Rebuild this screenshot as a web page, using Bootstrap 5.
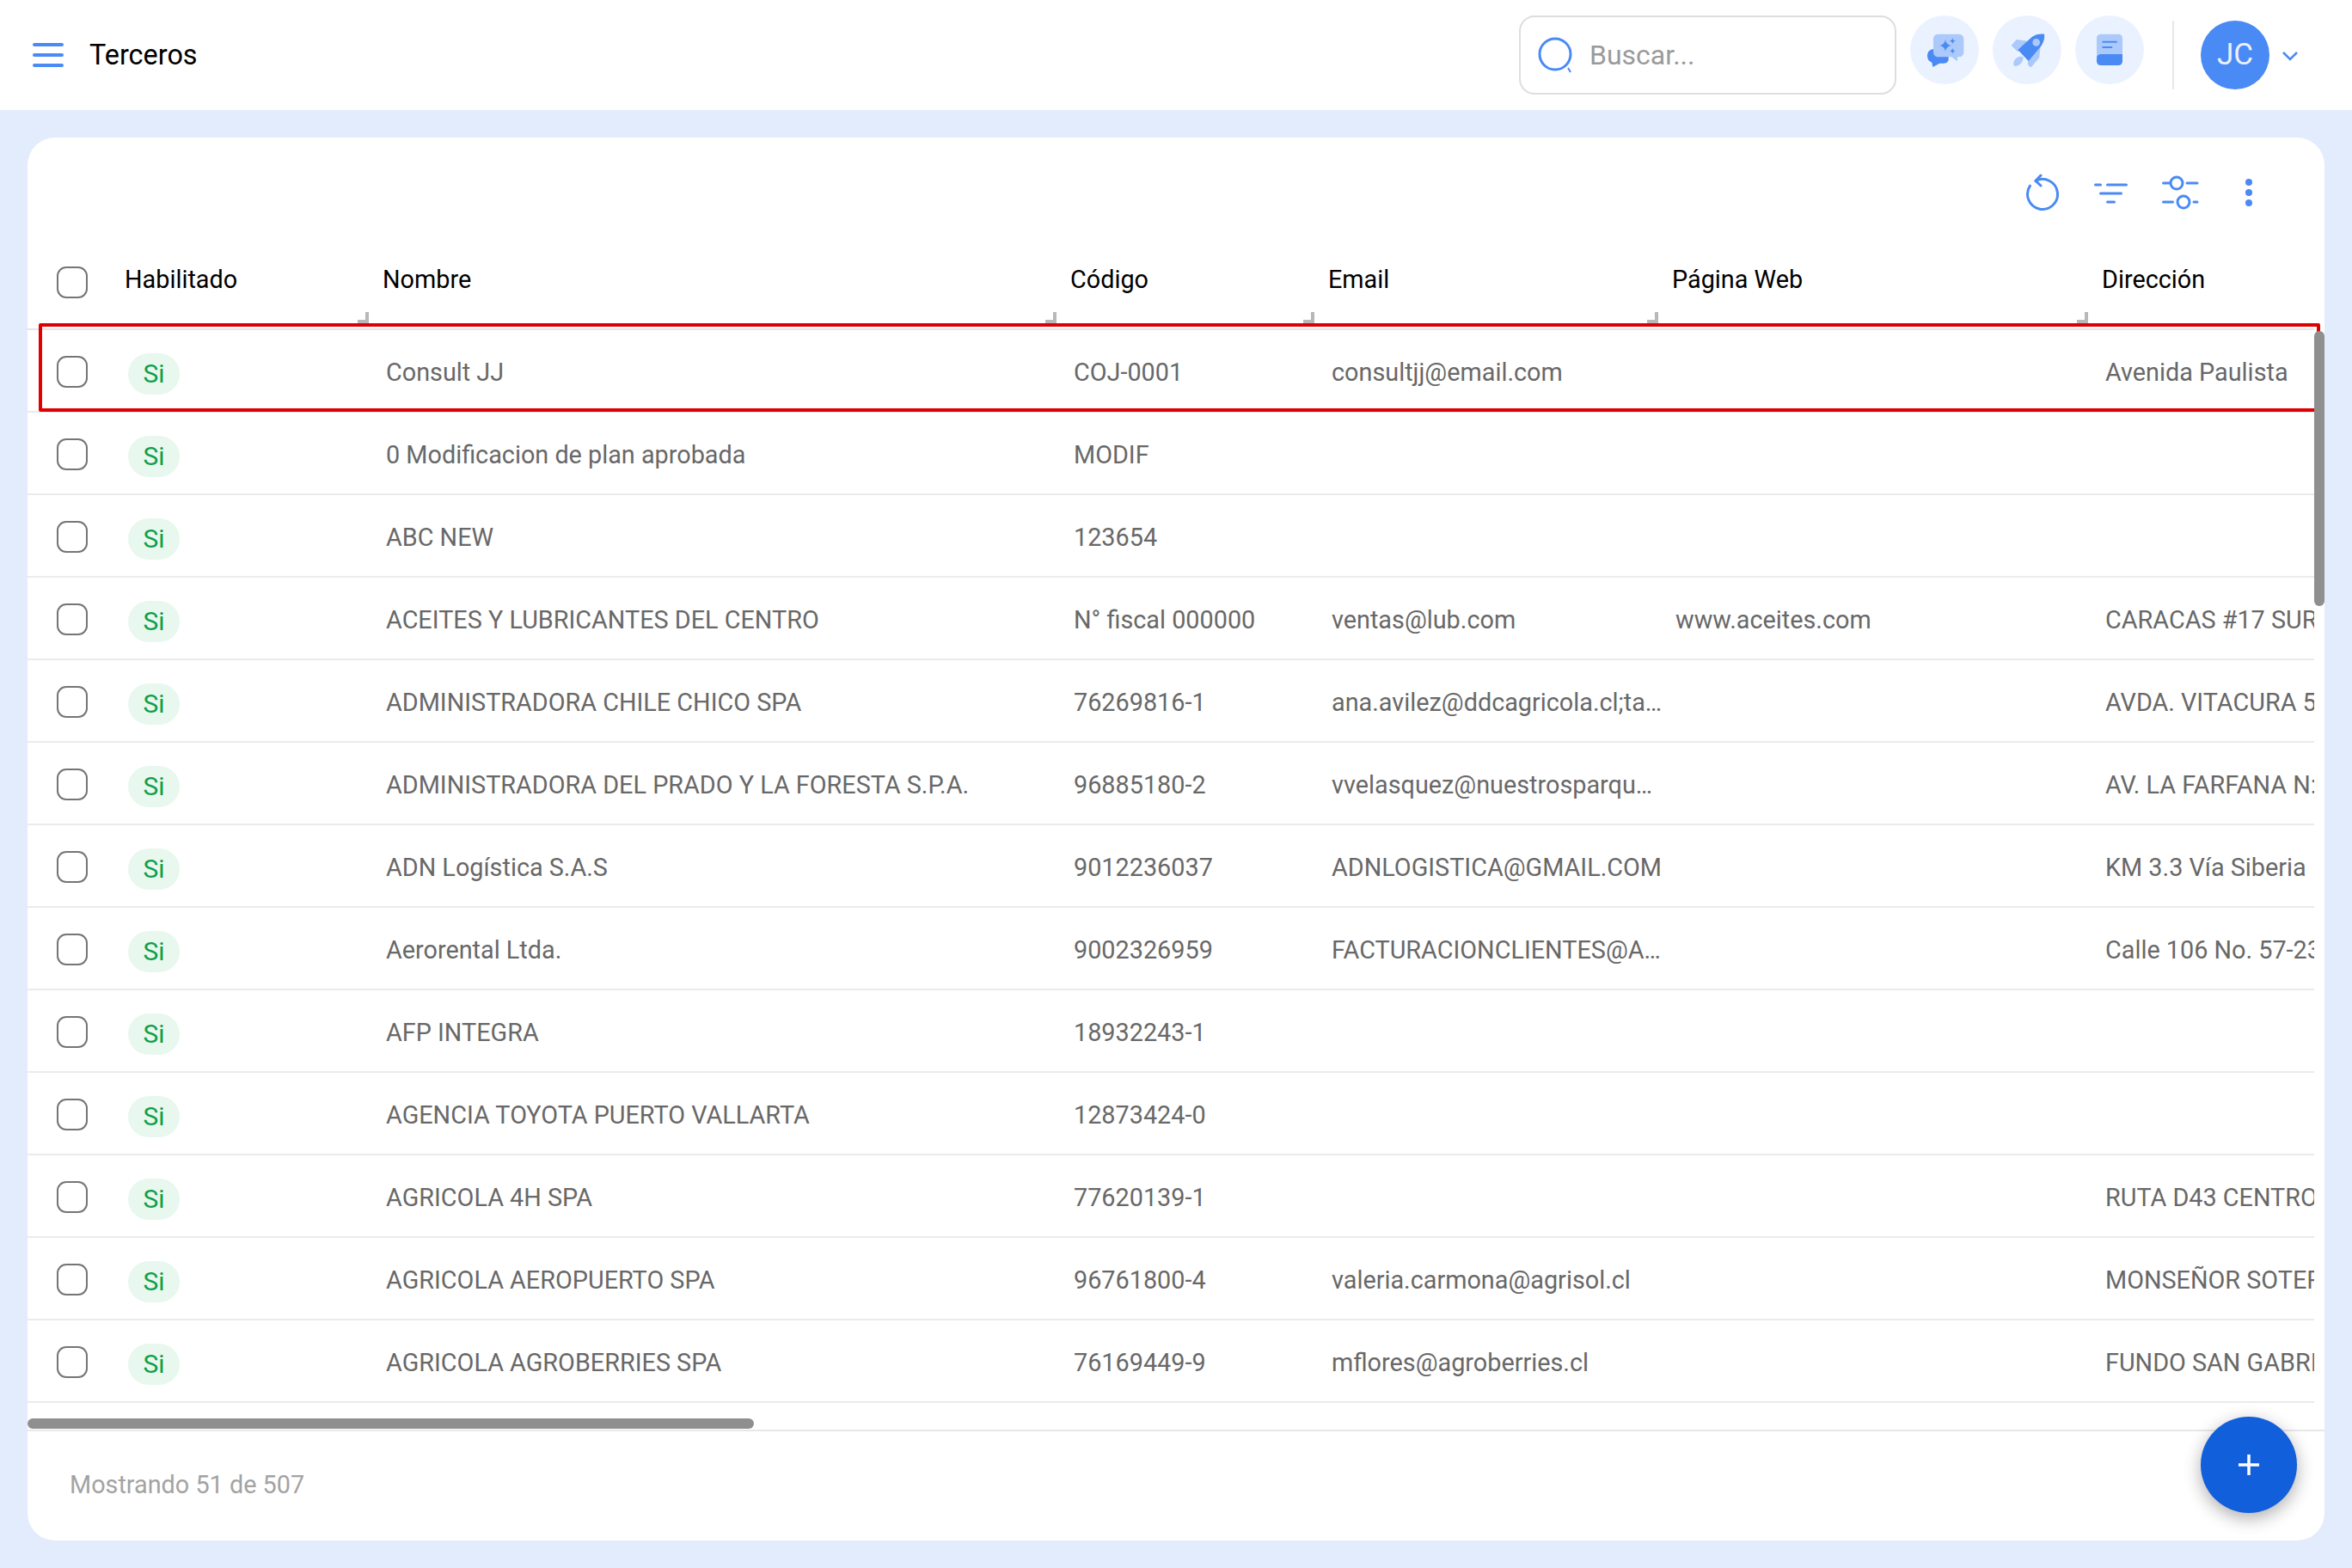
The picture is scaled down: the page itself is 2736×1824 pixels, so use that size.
<!DOCTYPE html>
<html lang="es">
<head>
<meta charset="utf-8">
<title>Terceros</title>
<link href="https://cdn.jsdelivr.net/npm/bootstrap@5.3.0/dist/css/bootstrap.min.css" rel="stylesheet">
<style>
html,body{height:100%;}
body{background:#e3ecfc;font-family:Roboto,"Liberation Sans",sans-serif;font-size:28.8px;overflow:hidden;}
.top-shell{height:128px;background:#fff;padding:0 62px 0 38px;}
.menu-lines{width:36px;height:28px;padding:0;border:0;background:none;display:flex;flex-direction:column;justify-content:space-between;}
.menu-lines span{display:block;height:4px;border-radius:2px;background:#4a8af4;}
.page-name{margin:0 0 0 30px;font-size:32.4px;font-weight:400;color:#000;}
.search-wrap{width:439px;height:92px;border:2px solid #dedede;border-radius:18px;padding:0 20px;background:#fff;gap:18px;}
.search-wrap input{border:0;outline:0;flex:1;min-width:0;font-size:32px;color:#333;background:transparent;padding:0;}
.search-wrap input::placeholder{color:#9a9a9a;opacity:1;}
.round-tools{gap:16px;margin:0 0 12px 16px;}
.round-tool{width:80px;height:80px;border-radius:50%;background:#ebf2ff;border:0;padding:0;display:block;}
.round-tool svg{display:block;}
.v-sep{width:2px;height:80px;background:#e8e8e8;margin:0 31px 0 33px;}
.user-chip{width:80px;height:80px;border-radius:50%;background:#4a8af4;color:#e9f0fe;font-size:35px;display:flex;align-items:center;justify-content:center;}
.user-caret{margin:1px 0 0 14px;}
.main-panel{position:relative;margin:32px 32px 0;height:1632px;background:#fff;border-radius:32px;display:flex;flex-direction:column;overflow:hidden;}
.panel-tools{height:128px;padding:42px 80px 0 0;flex:none;}
.tool-gap-a{margin-left:35px;}
.tool-gap-b{margin-left:36px;}
.tool-gap-c{margin-left:49px;}
.grid-clip{flex:1;min-height:0;margin-right:12px;overflow:hidden;}
.data-grid{table-layout:fixed;width:2897px;border-collapse:separate;border-spacing:0;}
.data-grid th{position:relative;height:96px;padding:0 0 18px 16px;font-weight:400;font-size:28.8px;color:#000;border-bottom:2px solid #e6e6e6;vertical-align:middle;white-space:nowrap;}
.data-grid td{height:96px;padding:5px 0 0 20px;font-size:28.8px;color:#686868;border-bottom:2px solid #ebebeb;vertical-align:middle;white-space:nowrap;line-height:1;}
.data-grid td.check-col{padding:3px 0 0 34px;}
.data-grid th.check-col{padding:0 0 14px 34px;}
.box-check{display:block;width:36px;height:37px;border:2px solid #757575;border-radius:11px;background:#fff;}
.yes-pill{display:inline-flex;align-items:center;justify-content:center;width:60px;height:48px;border-radius:24px;background:#e8f8ee;color:#0e9f4b;font-size:30px;position:relative;top:1px;}
.col-grip{position:absolute;right:0;bottom:2px;width:4px;height:17px;background:#b8b8b8;}
.col-grip::after{content:"";position:absolute;right:0;bottom:0;width:13px;height:8px;background:#b8b8b8;}
.red-frame{position:absolute;left:13px;top:216px;width:2654px;height:103px;border:4px solid #e00000;border-radius:2px;pointer-events:none;}
.thumb-v{position:absolute;right:0;top:225px;width:12px;height:320px;background:#8f8f8f;border-radius:6px;}
.thumb-h{position:absolute;left:0;top:1490px;width:845px;height:12px;background:#8f8f8f;border-radius:6px;}
.panel-foot{flex:none;height:129px;border-top:2px solid #e8e8e8;padding:0 0 1px 49px;color:#a3a3a3;font-size:28.8px;}
.add-fab{position:absolute;right:32px;top:1488px;width:112px;height:112px;border-radius:50%;border:0;background:#115fdb;padding:0;display:flex;align-items:center;justify-content:center;box-shadow:0 6px 20px rgba(0,0,0,.32);}
</style>
</head>
<body>
<header class="top-shell d-flex align-items-center">
  <button class="menu-lines" aria-label="Menú"><span></span><span></span><span></span></button>
  <h1 class="page-name">Terceros</h1>
  <div class="d-flex align-items-center ms-auto">
    <div class="search-wrap d-flex align-items-center">
      <svg width="42" height="42" viewBox="0 0 42 42" fill="none" stroke="#4a8af4"><circle cx="20" cy="20" r="18" stroke-width="3"/><path d="M35 36l3 5" stroke-width="2"/></svg>
      <input type="text" placeholder="Buscar...">
    </div>
    <div class="round-tools d-flex">
      <button class="round-tool" aria-label="Ayuda">
        <svg width="80" height="80" viewBox="67 23 240 240"><path d="M150 140C135 140 127 151 127 164C127 176 133 184 143 187L146 203L170 190H185C195 190 201 183 201 176V140Z" fill="#4a8af4"/><path d="M164 88H238A16 16 0 0 1 254 104V152A16 16 0 0 1 238 168H232V183L212 168H164A16 16 0 0 1 148 152V104A16 16 0 0 1 164 88Z" fill="#abc9fa"/><path d="M190 108Q193 125 210 128Q193 131 190 148Q187 131 170 128Q187 125 190 108ZM215 101Q216 111 226 112Q216 113 215 123Q214 113 204 112Q214 111 215 101ZM215 136Q216 146 226 147Q216 148 215 158Q214 148 204 147Q214 146 215 136Z" fill="#4a8af4"/></svg>
      </button>
      <button class="round-tool" aria-label="Novedades">
        <svg width="80" height="80" viewBox="355 23 240 240"><path d="M420 128L438 107L478 112L443 150ZM522 128L518 170L490 203C483 203 478 197 477 190L480 175ZM462 168C462 185 450 200 432 200C425 198 426 178 440 170C448 165 458 165 462 168Z" fill="#abc9fa"/><path d="M443 143L492 98C505 88 522 86 535 88C538 105 530 122 520 135L480 182Z" fill="#4a8af4"/><circle cx="507" cy="117" r="13" fill="#abc9fa"/></svg>
      </button>
      <button class="round-tool" aria-label="Guía">
        <svg width="80" height="80" viewBox="643 23 240 240"><path d="M732 88H794A14 14 0 0 1 808 102V170H718V102A14 14 0 0 1 732 88Z" fill="#abc9fa"/><path d="M718 172C718 163 725 158 734 158H808V183A14 14 0 0 1 794 197H732A14 14 0 0 1 718 183Z" fill="#4a8af4"/><path d="M740 115H787M740 134H770" stroke="#4a8af4" stroke-width="6" stroke-linecap="round"/></svg>
      </button>
    </div>
    <div class="v-sep"></div>
    <div class="user-chip">JC</div>
    <svg class="user-caret" width="20" height="12" viewBox="0 0 20 12" fill="none" stroke="#4a8af4" stroke-width="2.500"><path d="M2 2l8 8 8-8"/></svg>
  </div>
</header>

<main class="main-panel">
  <div class="panel-tools d-flex justify-content-end align-items-start">
    <svg width="44" height="44" viewBox="0 0 44 44" fill="none" stroke="#4a8af4" stroke-width="3" stroke-linecap="round" stroke-linejoin="round"><path d="M7.500 14.200A17.500 17.500 0 1 0 14 8.400"/><path d="M20 2L14 8.400L20 14"/></svg>
    <svg class="tool-gap-a" width="44" height="44" viewBox="0 0 44 44" fill="none" stroke="#4a8af4" stroke-width="3" stroke-linecap="round"><path d="M4.500 13h6M18.500 13h22M10.500 23h24M18.500 33h8"/></svg>
    <svg class="tool-gap-b" width="46" height="44" viewBox="0 0 46 44" fill="none" stroke="#4a8af4" stroke-width="3" stroke-linecap="round"><path d="M3.500 11h8M31 11h12M3.500 33h11M39 33h4"/><circle cx="19" cy="11" r="7"/><circle cx="27" cy="33" r="7"/></svg>
    <svg class="tool-gap-c" width="16" height="44" viewBox="0 0 16 44" fill="#4a8af4"><circle cx="8" cy="10" r="4"/><circle cx="8" cy="22" r="4"/><circle cx="8" cy="34" r="4"/></svg>
  </div>
  <div class="grid-clip">
    <table class="data-grid">
      <colgroup><col style="width:97px"><col style="width:300px"><col style="width:800px"><col style="width:300px"><col style="width:400px"><col style="width:500px"><col style="width:500px"></colgroup>
      <thead>
        <tr>
          <th class="check-col"><span class="box-check"></span></th>
          <th>Habilitado<i class="col-grip"></i></th>
          <th>Nombre<i class="col-grip"></i></th>
          <th>Código<i class="col-grip"></i></th>
          <th>Email<i class="col-grip"></i></th>
          <th>Página Web<i class="col-grip"></i></th>
          <th>Dirección</th>
        </tr>
      </thead>
      <tbody>
        <tr><td class="check-col"><span class="box-check"></span></td><td><span class="yes-pill">Si</span></td><td>Consult JJ</td><td>COJ-0001</td><td>consultjj@email.com</td><td></td><td>Avenida Paulista</td></tr>
        <tr><td class="check-col"><span class="box-check"></span></td><td><span class="yes-pill">Si</span></td><td>0 Modificacion de plan aprobada</td><td>MODIF</td><td></td><td></td><td></td></tr>
        <tr><td class="check-col"><span class="box-check"></span></td><td><span class="yes-pill">Si</span></td><td>ABC NEW</td><td>123654</td><td></td><td></td><td></td></tr>
        <tr><td class="check-col"><span class="box-check"></span></td><td><span class="yes-pill">Si</span></td><td>ACEITES Y LUBRICANTES DEL CENTRO</td><td>N° fiscal 000000</td><td>ventas@lub.com</td><td>www.aceites.com</td><td>CARACAS #17 SUR</td></tr>
        <tr><td class="check-col"><span class="box-check"></span></td><td><span class="yes-pill">Si</span></td><td>ADMINISTRADORA CHILE CHICO SPA</td><td>76269816-1</td><td>ana.avilez@ddcagricola.cl;ta…</td><td></td><td>AVDA. VITACURA 5</td></tr>
        <tr><td class="check-col"><span class="box-check"></span></td><td><span class="yes-pill">Si</span></td><td>ADMINISTRADORA DEL PRADO Y LA FORESTA S.P.A.</td><td>96885180-2</td><td>vvelasquez@nuestrosparqu…</td><td></td><td>AV. LA FARFANA N:</td></tr>
        <tr><td class="check-col"><span class="box-check"></span></td><td><span class="yes-pill">Si</span></td><td>ADN Logística S.A.S</td><td>9012236037</td><td>ADNLOGISTICA@GMAIL.COM</td><td></td><td>KM 3.3 Vía Siberia</td></tr>
        <tr><td class="check-col"><span class="box-check"></span></td><td><span class="yes-pill">Si</span></td><td>Aerorental Ltda.</td><td>9002326959</td><td>FACTURACIONCLIENTES@A…</td><td></td><td>Calle 106 No. 57-23</td></tr>
        <tr><td class="check-col"><span class="box-check"></span></td><td><span class="yes-pill">Si</span></td><td>AFP INTEGRA</td><td>18932243-1</td><td></td><td></td><td></td></tr>
        <tr><td class="check-col"><span class="box-check"></span></td><td><span class="yes-pill">Si</span></td><td>AGENCIA TOYOTA PUERTO VALLARTA</td><td>12873424-0</td><td></td><td></td><td></td></tr>
        <tr><td class="check-col"><span class="box-check"></span></td><td><span class="yes-pill">Si</span></td><td>AGRICOLA 4H SPA</td><td>77620139-1</td><td></td><td></td><td>RUTA D43 CENTRO</td></tr>
        <tr><td class="check-col"><span class="box-check"></span></td><td><span class="yes-pill">Si</span></td><td>AGRICOLA AEROPUERTO SPA</td><td>96761800-4</td><td>valeria.carmona@agrisol.cl</td><td></td><td>MONSEÑOR SOTERO</td></tr>
        <tr><td class="check-col"><span class="box-check"></span></td><td><span class="yes-pill">Si</span></td><td>AGRICOLA AGROBERRIES SPA</td><td>76169449-9</td><td>mflores@agroberries.cl</td><td></td><td>FUNDO SAN GABRIEL</td></tr>
      </tbody>
    </table>
  </div>
  <div class="panel-foot d-flex align-items-center">Mostrando 51 de 507</div>
  <div class="red-frame"></div>
  <div class="thumb-v"></div>
  <div class="thumb-h"></div>
  <button class="add-fab" aria-label="Agregar"><svg width="26" height="26" viewBox="0 0 26 26" stroke="#fff" stroke-width="3.500"><path d="M13 1v24M1 13h24"/></svg></button>
</main>
<script src="https://cdn.jsdelivr.net/npm/bootstrap@5.3.0/dist/js/bootstrap.bundle.min.js"></script>
</body>
</html>
